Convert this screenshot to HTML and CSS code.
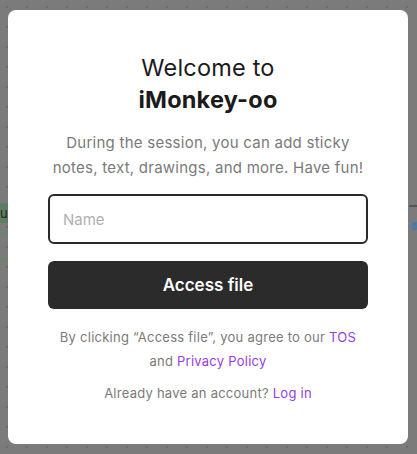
FILE: index.html
```html
<!DOCTYPE html>
<html>
<head>
<meta charset="utf-8">
<link rel="stylesheet" href="styles.css">
</head>
<body>
<div class="canvas">
  <div class="bg-note bg-left">u</div>
  <div class="bg-line bg-l1"></div>
  <div class="bg-line bg-l2"></div>
  <div class="bg-right"></div>
  <div class="bg-right-blue"></div>
</div>
<div class="overlay">
  <div class="modal">
    <h1 class="title">Welcome to<br><strong>iMonkey-oo</strong></h1>
    <p class="desc">During the session, you can add sticky notes, text, drawings, and more. Have fun!</p>
    <input class="name" type="text" placeholder="Name">
    <button class="access">Access file</button>
    <p class="terms">By clicking “Access file”, you agree to our <a href="#">TOS</a><br>and <a href="#">Privacy Policy</a></p>
    <p class="login">Already have an account? <a href="#">Log in</a></p>
  </div>
</div>
</body>
</html>
```

FILE: styles.css
```css
html, body {
  margin: 0;
  padding: 0;
  width: 417px;
  height: 454px;
  overflow: hidden;
}
body {
  font-family: Inter, "Noto Sans", sans-serif;
  background-color: #7b7b7b;
  background-image: radial-gradient(circle, #6c6c6c 0.9px, transparent 1.2px);
  background-size: 20px 20px;
  background-position: -3px -3px;
  position: relative;
}
.canvas {
  position: absolute;
  inset: 0;
}
.bg-note {
  position: absolute;
  background: #5f7d63;
  color: #1f2a20;
  font-size: 13px;
  line-height: 20px;
}
.bg-left {
  left: 0;
  top: 203px;
  width: 8px;
  height: 20px;
  overflow: visible;
}
.bg-line {
  position: absolute;
  left: 0;
  width: 8px;
  height: 4px;
  background: #6f8170;
}
.bg-l1 { top: 232px; }
.bg-l2 { top: 258px; }
.bg-right {
  position: absolute;
  left: 409px;
  top: 205px;
  width: 8px;
  height: 2px;
  background: #555;
}
.bg-right-blue {
  position: absolute;
  left: 412px;
  top: 222px;
  width: 5px;
  height: 8px;
  background: #4f7ba3;
}
.overlay {
  position: relative;
  padding: 10px 9px 10px 8px;
}
.modal {
  width: 400px;
  height: 434px;
  box-sizing: border-box;
  background: #fff;
  border-radius: 8px;
  padding: 42px 30px 0;
  display: flex;
  flex-direction: column;
  align-items: center;
  text-align: center;
}
.title {
  margin: 0;
  font-size: 23.5px;
  font-weight: 400;
  line-height: 32px;
  color: #1b1b1b;
  letter-spacing: 0.2px;
}
.title strong {
  font-weight: 700;
}
.desc {
  margin: 14px 0 0;
  font-size: 15px;
  line-height: 25px;
  color: #7a7a7a;
  width: 330px;
  letter-spacing: 0.25px;
}
.name {
  margin-top: 14px;
  width: 320px;
  height: 50px;
  box-sizing: border-box;
  border: 2px solid #2a2a2a;
  border-radius: 6px;
  padding: 0 13px;
  font-family: inherit;
  font-size: 15px;
  color: #222;
  outline: none;
}
.name::placeholder {
  color: #b0b0b0;
}
.access {
  margin-top: 17px;
  width: 320px;
  height: 48px;
  border: none;
  border-radius: 6px;
  background: #2b2b2b;
  color: #fff;
  font-family: inherit;
  font-size: 17px;
  font-weight: 600;
}
.terms {
  margin: 16px 0 0;
  font-size: 13px;
  line-height: 24px;
  color: #7a7a7a;
  letter-spacing: 0.25px;
}
.login {
  margin: 8px 0 0;
  font-size: 13px;
  line-height: 24px;
  color: #7a7a7a;
  letter-spacing: 0.25px;
}
a {
  color: #9340e6;
  text-decoration: none;
}
```
